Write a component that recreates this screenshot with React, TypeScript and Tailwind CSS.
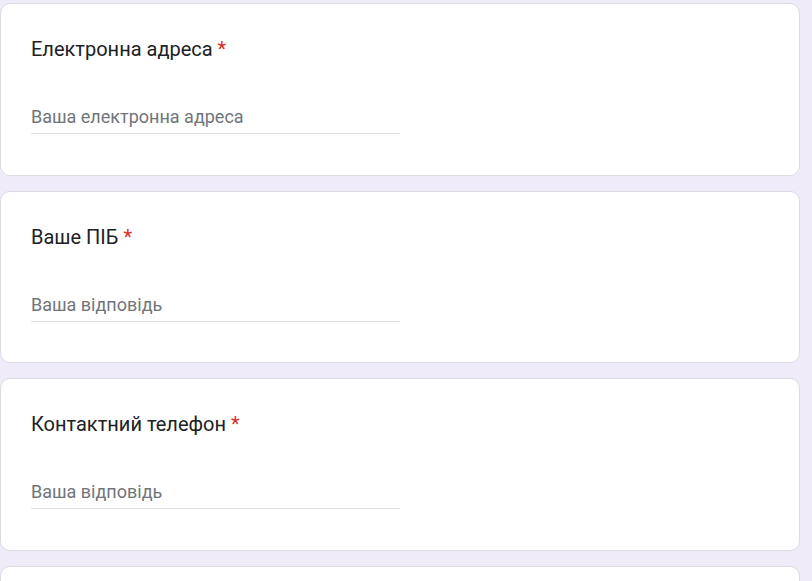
import React from "react";

type Question = {
  title: string;
  placeholder: string;
};

const questions: Question[] = [
  { title: "Електронна адреса", placeholder: "Ваша електронна адреса" },
  { title: "Ваше ПІБ", placeholder: "Ваша відповідь" },
  { title: "Контактний телефон", placeholder: "Ваша відповідь" },
  { title: "Назва організації", placeholder: "Ваша відповідь" },
];

const QuestionCard: React.FC<{ q: Question }> = ({ q }) => (
  <div className="bg-white border border-[#dadce0] rounded-[10px] pl-[30px] pt-[30px] pb-[40.5px]">
    <div className="text-[20px] leading-[30px] text-[#202124]">
      {q.title} <span className="text-[#d93025]">*</span>
    </div>
    <div className="mt-[41px] w-[369px] border-b border-[#e0e0e0] pb-[4px]">
      <input
        type="text"
        placeholder={q.placeholder}
        className="block w-full h-[24px] text-[18px] leading-[24px] text-[#202124] placeholder:text-[#70757a] outline-none bg-transparent"
      />
    </div>
  </div>
);

export default function App() {
  return (
    <div
      className="bg-[#f0ebf8] pt-[3px] pr-[12px] h-[581px] overflow-hidden"
      style={{ fontFamily: "Roboto, 'Noto Sans', sans-serif" }}
    >
      <div className="flex flex-col gap-[15px]">
        {questions.map((q) => (
          <QuestionCard key={q.title} q={q} />
        ))}
      </div>
    </div>
  );
}
